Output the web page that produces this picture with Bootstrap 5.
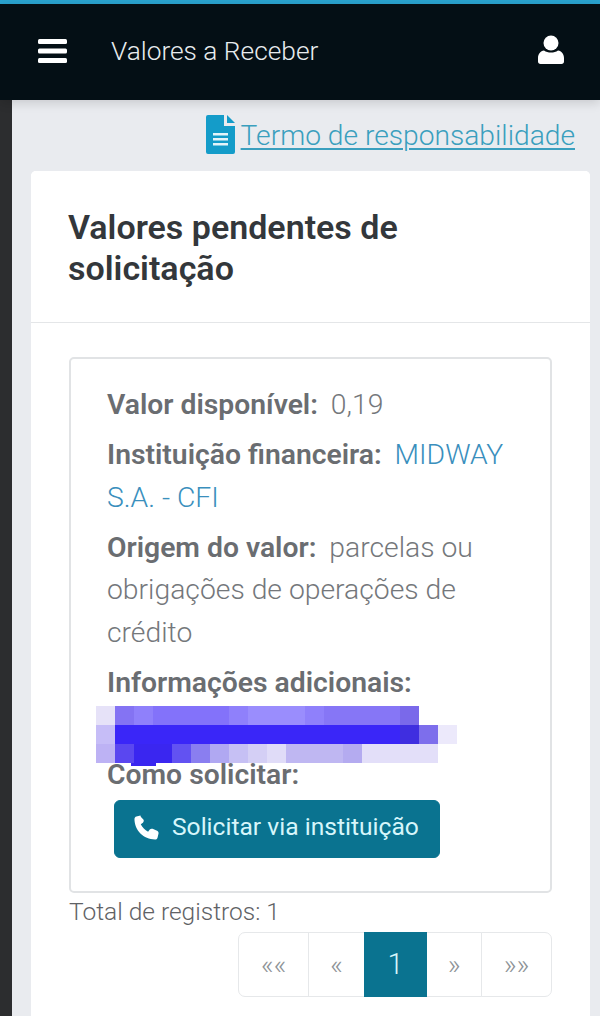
<!DOCTYPE html>
<html lang="pt-BR">
<head>
<meta charset="utf-8">
<title>Valores a Receber</title>
<link href="https://cdn.jsdelivr.net/npm/bootstrap@5.3.0/dist/css/bootstrap.min.css" rel="stylesheet">
<style>
html,body{height:1016px;overflow:hidden}
body{font-family:Roboto,"Liberation Sans",sans-serif;background:#e9ebef;color:#6c6f73}
.top-line{height:4px;background:#2aa3cf}
.app-bar{height:96px;background:#040f15;padding:0 36px 0 38px;box-shadow:0 3px 10px rgba(0,0,0,.14);z-index:2}
.app-bar .navbar-brand{font-size:26.3px;font-weight:300;color:#e8ecee;margin:0 0 0 43px;padding:0}
.burger{display:block;margin-bottom:2px}
.user-ico{margin-bottom:4px}
.page-wrap{height:916px}
.dark-strip{width:12px;flex:none;background:#2c2d2f}
.content-col{padding:0 10px 0 19px;min-width:0;flex:1}
.term-row{height:71px;padding:15px 15px 0 0;gap:6px}
.term-link{font-size:28.2px;font-weight:300;color:#3a9fbe;text-decoration-thickness:2px;text-underline-offset:3px;line-height:42px}
.main-card{border:0;border-radius:5px 5px 0 0;height:845px}
.main-card .card-header{background:#fff;padding:36px 37px 33px;border-bottom:1px solid #e4e6e8}
.main-card h1{font-size:34px;font-weight:600;line-height:41px;color:#33373b;margin:0;max-width:420px}
.main-card .card-body{padding:34px 38px 0}
.value-box{border:2px solid #e1e3e5;border-radius:5px;height:536px;padding:25px 36px 0;font-size:28.3px;font-weight:300;line-height:42.5px}
.value-box p{margin:0 0 7.5px;color:#74777b}
.value-box b{font-weight:600;color:#6a6d71;margin-right:6px}
.fin-name{color:#3a8fbd}
.redact{display:block;margin:2px 0 -12px -11px}
.how-label{position:relative}
.btn-request{--bs-btn-bg:#0a7390;--bs-btn-hover-bg:#0a7390;--bs-btn-color:#d6f6fb;--bs-btn-hover-color:#d6f6fb;--bs-btn-border-color:#0a7390;--bs-btn-hover-border-color:#0a7390;font-size:24.6px;line-height:30px;width:326px;height:58px;margin:3px 0 0 7px;padding:0 0 3px 18px;border-radius:6px;gap:12px}
.total-line{font-size:24.5px;font-weight:300;color:#5f6265;line-height:36px;margin-top:1px}
.pager-row{margin-top:2px}
.pager-row .pagination{--bs-pagination-border-color:#e6e8ea;--bs-pagination-color:#8d9296;--bs-pagination-border-radius:7px;margin:0}
.pager-row .page-link{height:65px;display:flex;align-items:center;justify-content:center;font-size:28px;font-weight:300;padding:0;color:#8d9296;background:#fff;border-color:#e6e8ea}
.pg-a .page-link{width:71px}.pg-b .page-link{width:57px}.pg-c .page-link{width:63px;background:#0a7390;border-color:#0a7390;color:#d6f6fb;font-size:29px}.pg-d .page-link{width:56px}.pg-e .page-link{width:71px}
</style>
</head>
<body>
<div class="top-line"></div>
<nav class="navbar app-bar flex-nowrap justify-content-start">
  <svg class="burger" width="30" height="26" viewBox="0 0 30 26" aria-hidden="true"><g fill="#fff"><rect x="0" y="1" width="29" height="5" rx="1.5"/><rect x="0" y="10.5" width="29" height="5" rx="1.5"/><rect x="0" y="20" width="29" height="5" rx="1.5"/></g></svg>
  <span class="navbar-brand">Valores a Receber</span>
  <svg class="ms-auto user-ico" width="26" height="30" viewBox="0 0 26 30" aria-hidden="true"><g fill="#fff"><circle cx="13" cy="8" r="7.5"/><path d="M6 15.5c2 1.400 4.300 2 7 2s5-.6 7-2c3.500.6 6 3.500 6 7.500v3.500c0 1.500-1 2.500-2.500 2.500h-21C1 29 0 28 0 26.500V23c0-4 2.500-6.900 6-7.500z"/></g></svg>
</nav>
<div class="d-flex page-wrap">
  <div class="dark-strip"></div>
  <main class="content-col">
    <div class="term-row d-flex justify-content-end align-items-start">
      <svg width="29" height="39" viewBox="0 0 29 39" aria-hidden="true"><path fill="#149cc9" d="M2 0h16v11h11v26a2 2 0 0 1-2 2H2a2 2 0 0 1-2-2V2a2 2 0 0 1 2-2z"/><path fill="#149cc9" d="M21 0l8 8h-8z"/><g fill="#e4f4f9"><rect x="7" y="18" width="15" height="2.500"/><rect x="7" y="23" width="15" height="2.500"/><rect x="7" y="28" width="15" height="2.500"/></g></svg>
      <a class="term-link" href="#">Termo de responsabilidade</a>
    </div>
    <section class="card main-card">
      <div class="card-header"><h1>Valores pendentes de solicitação</h1></div>
      <div class="card-body">
        <div class="value-box">
          <p><b>Valor disponível:</b> 0,19</p>
          <p><b>Instituição financeira:</b> <span class="fin-name">MIDWAY S.A. - CFI</span></p>
          <p><b>Origem do valor:</b> parcelas ou obrigações de operações de crédito</p>
          <p class="mb-0"><b>Informações adicionais:</b></p>
          <svg class="redact" width="370" height="60" viewBox="0 0 370 60" shape-rendering="crispEdges" aria-hidden="true">
            <rect x="0" y="0" width="19" height="19" fill="#e6e2f8"/><rect x="19" y="0" width="304" height="19" fill="#8f80fb"/><rect x="19" y="0" width="19" height="19" fill="#8473f3"/><rect x="57" y="0" width="76" height="19" fill="#8372fa"/><rect x="152" y="0" width="57" height="19" fill="#9a8dfd"/><rect x="228" y="0" width="76" height="19" fill="#8676f6"/><rect x="304" y="0" width="19" height="19" fill="#7a69ea"/>
            <rect x="0" y="19" width="19" height="19" fill="#c6bdf7"/><rect x="19" y="19" width="285" height="19" fill="#3a26f8"/><rect x="304" y="19" width="19" height="19" fill="#3f2ee0"/><rect x="323" y="19" width="19" height="19" fill="#7d6eec"/><rect x="342" y="19" width="19" height="19" fill="#ece9fb"/>
            <rect x="0" y="38" width="19" height="19" fill="#bdb2f4"/><rect x="19" y="38" width="19" height="19" fill="#5a47f0"/><rect x="38" y="38" width="38" height="19" fill="#3a26f0"/><rect x="76" y="38" width="19" height="19" fill="#6252f2"/><rect x="95" y="38" width="19" height="19" fill="#8a7ef0"/><rect x="114" y="38" width="19" height="19" fill="#b0a8f2"/><rect x="133" y="38" width="19" height="19" fill="#c6c0f4"/><rect x="152" y="38" width="19" height="19" fill="#d4cff5"/><rect x="171" y="38" width="19" height="19" fill="#e0dcf8"/><rect x="190" y="38" width="57" height="19" fill="#bfb7f2"/><rect x="247" y="38" width="19" height="19" fill="#b4abf0"/><rect x="266" y="38" width="76" height="19" fill="#e3dff9"/>
            <rect x="35" y="57" width="25" height="3" fill="#3a26f0"/>
          </svg>
          <p class="mb-0 how-label"><b>Como solicitar:</b></p>
          <a class="btn btn-request d-inline-flex align-items-center" href="#">
            <svg width="27" height="27" viewBox="0 0 24 24" aria-hidden="true"><path fill="#fff" d="M6.600 1.300 3 2.200C2 2.500 1.300 3.400 1.300 4.500c0 10 8.200 18.200 18.200 18.200 1.100 0 2-.7 2.300-1.700l.9-3.600c.2-1-.3-2.100-1.300-2.500l-4-1.700c-.9-.4-1.900-.1-2.500.6l-1.500 1.900c-2.800-1.400-5.100-3.700-6.500-6.500l1.900-1.500c.7-.6 1-1.600.6-2.500L7.100 2.700c-.4-1-.5-1.600-.5-1.400z"/></svg>
            Solicitar via instituição
          </a>
        </div>
        <div class="total-line">Total de registros: 1</div>
        <div class="pager-row d-flex justify-content-end">
          <ul class="pagination">
            <li class="page-item pg-a"><a class="page-link" href="#">««</a></li>
            <li class="page-item pg-b"><a class="page-link" href="#">«</a></li>
            <li class="page-item active pg-c"><a class="page-link" href="#">1</a></li>
            <li class="page-item pg-d"><a class="page-link" href="#">»</a></li>
            <li class="page-item pg-e"><a class="page-link" href="#">»»</a></li>
          </ul>
        </div>
      </div>
    </section>
  </main>
</div>
<script src="https://cdn.jsdelivr.net/npm/bootstrap@5.3.0/dist/js/bootstrap.bundle.min.js"></script>
</body>
</html>
